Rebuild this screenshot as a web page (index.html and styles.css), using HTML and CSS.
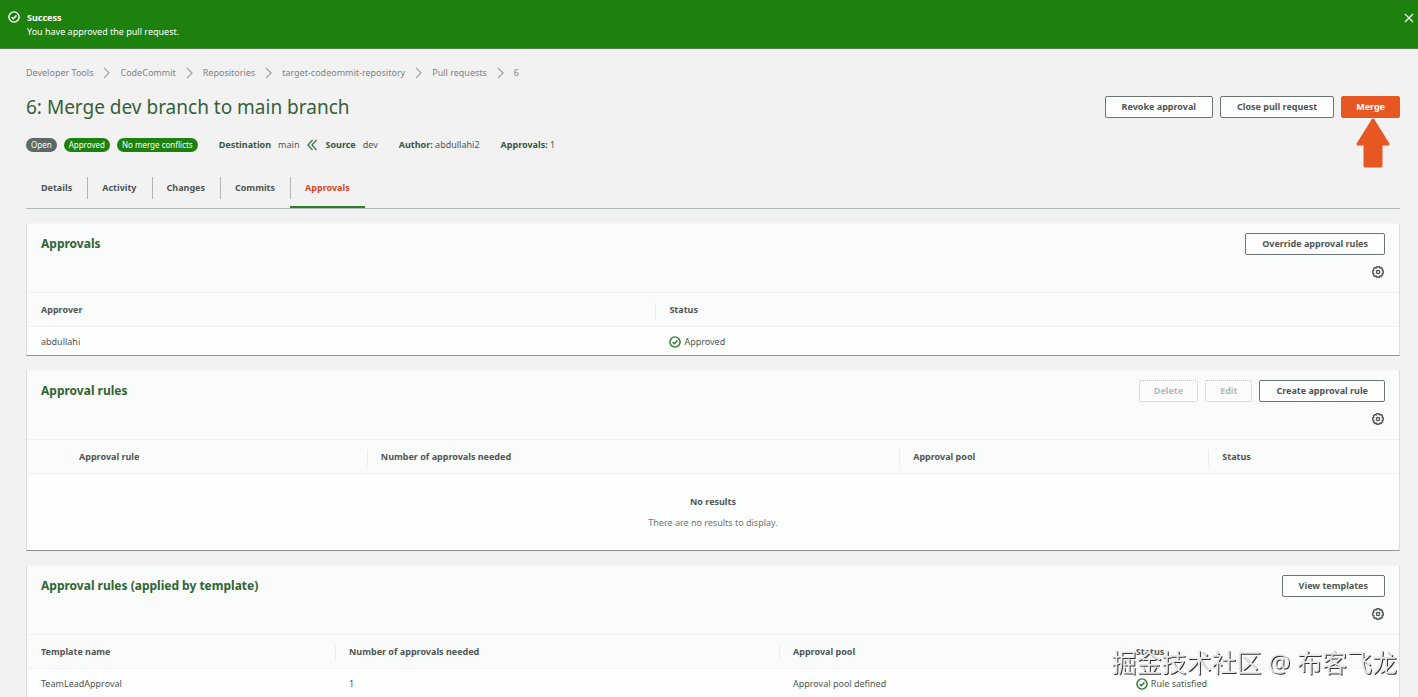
FILE: index.html
```html
<!DOCTYPE html>
<html lang="en">
<head>
  <meta charset="UTF-8">
  <meta name="viewport" content="width=device-width, initial-scale=1.0">
  <title>Merge dev branch to main branch</title>
  <link rel="stylesheet" href="styles.css">
</head>
<body>

  <!-- shared icons -->
  <svg class="icon-defs" aria-hidden="true">
    <symbol id="icon-check" viewBox="0 0 16 16">
      <circle cx="8" cy="8" r="6.8" fill="none" stroke="currentColor" stroke-width="1.9"/>
      <path d="M4.8 8.2l2.3 2.2 4.2-4.4" fill="none" stroke="currentColor" stroke-width="1.9"/>
    </symbol>
    <symbol id="icon-gear" viewBox="0 0 16 16">
      <path d="M6.4 1h3.2l.7 1.6 1.8-.6 2 2-.6 1.7 1.5.7v3.2l-1.5.7.6 1.7-2 2-1.8-.6-.7 1.6H6.4l-.7-1.6-1.8.6-2-2 .6-1.7L1 9.6V6.4l1.5-.7L1.9 4l2-2 1.8.6z" fill="none" stroke="currentColor" stroke-width="1.9" stroke-linejoin="round"/>
      <circle cx="8" cy="8" r="2.2" fill="none" stroke="currentColor" stroke-width="1.9"/>
    </symbol>
    <symbol id="icon-chevron" viewBox="0 0 8 12">
      <path d="M1.5 1l5 5-5 5" fill="none" stroke="currentColor" stroke-width="1.4"/>
    </symbol>
  </svg>

  <div class="flash" role="status">
    <svg class="icon"><use href="#icon-check"/></svg>
    <div class="flash-text">
      <strong>Success</strong>
      <p>You have approved the pull request.</p>
    </div>
    <button class="flash-close" type="button" aria-label="Dismiss">
      <svg viewBox="0 0 10 10"><path d="M1 1l8 8M9 1l-8 8" fill="none" stroke="currentColor" stroke-width="1.2"/></svg>
    </button>
  </div>

  <main>
    <nav class="breadcrumbs" aria-label="Breadcrumbs">
      <a href="#">Developer Tools</a>
      <svg><use href="#icon-chevron"/></svg>
      <a href="#">CodeCommit</a>
      <svg><use href="#icon-chevron"/></svg>
      <a href="#">Repositories</a>
      <svg><use href="#icon-chevron"/></svg>
      <a href="#">target-codeommit-repository</a>
      <svg><use href="#icon-chevron"/></svg>
      <a href="#">Pull requests</a>
      <svg><use href="#icon-chevron"/></svg>
      <a href="#" aria-current="page">6</a>
    </nav>

    <header class="title-bar">
      <h1>6: Merge dev branch to main branch</h1>
      <div class="actions">
        <button class="btn" type="button">Revoke approval</button>
        <button class="btn" type="button">Close pull request</button>
        <div class="merge">
          <button class="btn btn-primary" type="button">Merge</button>
          <svg class="arrow" viewBox="0 0 34 50" aria-hidden="true">
            <path d="M17 2l15 24H25v22H9V26H2z" fill="currentColor" stroke="currentColor" stroke-width="3" stroke-linejoin="round"/>
          </svg>
        </div>
      </div>
    </header>

    <div class="meta">
      <div class="badges">
        <span class="badge badge-grey">Open</span>
        <span class="badge">Approved</span>
        <span class="badge">No merge conflicts</span>
      </div>
      <div class="branches">
        <b>Destination</b>
        <span>main</span>
        <svg viewBox="0 0 10 12"><path d="M5.5 1L1 6l4.500 5M9.5 1L5 6l4.500 5" fill="none" stroke="currentColor" stroke-width="1.4"/></svg>
        <b>Source</b>
        <span>dev</span>
      </div>
      <div><b>Author:</b> abdullahi2</div>
      <div><b>Approvals:</b> 1</div>
    </div>

    <nav class="tabs" aria-label="Pull request">
      <a href="#">Details</a>
      <a href="#">Activity</a>
      <a href="#">Changes</a>
      <a href="#">Commits</a>
      <a class="active" href="#">Approvals</a>
    </nav>

    <section class="panel">
      <div class="panel-header">
        <h2>Approvals</h2>
        <div class="actions">
          <button class="btn" type="button">Override approval rules</button>
        </div>
        <button class="settings" type="button" aria-label="Preferences"><svg class="icon"><use href="#icon-gear"/></svg></button>
      </div>
      <table class="approvals-table">
        <thead>
          <tr><th>Approver</th><th>Status</th></tr>
        </thead>
        <tbody>
          <tr>
            <td>abdullahi</td>
            <td><span class="status"><svg class="icon"><use href="#icon-check"/></svg>Approved</span></td>
          </tr>
        </tbody>
      </table>
    </section>

    <section class="panel">
      <div class="panel-header">
        <h2>Approval rules</h2>
        <div class="actions">
          <button class="btn" type="button" disabled>Delete</button>
          <button class="btn" type="button" disabled>Edit</button>
          <button class="btn" type="button">Create approval rule</button>
        </div>
        <button class="settings" type="button" aria-label="Preferences"><svg class="icon"><use href="#icon-gear"/></svg></button>
      </div>
      <table class="rules-table">
        <thead>
          <tr><th></th><th>Approval rule</th><th>Number of approvals needed</th><th>Approval pool</th><th>Status</th></tr>
        </thead>
        <tbody>
          <tr>
            <td class="empty" colspan="5">
              <b>No results</b>
              <p>There are no results to display.</p>
            </td>
          </tr>
        </tbody>
      </table>
    </section>

    <section class="panel">
      <div class="panel-header">
        <h2>Approval rules (applied by template)</h2>
        <div class="actions">
          <button class="btn" type="button">View templates</button>
        </div>
        <button class="settings" type="button" aria-label="Preferences"><svg class="icon"><use href="#icon-gear"/></svg></button>
      </div>
      <table class="template-table">
        <thead>
          <tr><th>Template name</th><th>Number of approvals needed</th><th>Approval pool</th><th>Status</th></tr>
        </thead>
        <tbody>
          <tr>
            <td>TeamLeadApproval</td>
            <td>1</td>
            <td>Approval pool defined</td>
            <td><span class="status"><svg class="icon"><use href="#icon-check"/></svg>Rule satisfied</span></td>
          </tr>
        </tbody>
      </table>
    </section>
  </main>

  <div class="watermark">掘金技术社区 @ 布客飞龙</div>

</body>
</html>
```

FILE: styles.css
```css
* {
  box-sizing: border-box;
}

body {
  margin: 0;
  background: #f2f2f2;
  color: #4f5654;
  font-family: "Noto Sans", "Open Sans", sans-serif;
  font-size: 9px;
  line-height: 14px;
}

h1, h2, p {
  margin: 0;
}

a {
  color: inherit;
  text-decoration: none;
}

button {
  font: inherit;
  color: inherit;
  cursor: pointer;
}

.icon-defs {
  display: none;
}

.icon {
  display: block;
  width: 12px;
  height: 12px;
}

/* success message */
.flash {
  display: flex;
  align-items: flex-start;
  gap: 7px;
  padding: 11px 4px 9px 8px;
  background: #1d810e;
  border-bottom: 1px solid #4f7d48;
  color: white;
}

.flash-text {
  flex: 1;
}

.flash-text strong {
  display: block;
}

.flash-close {
  display: flex;
  padding: 2px 0;
  border: none;
  background: none;
}

.flash-close svg {
  width: 10px;
  height: 10px;
}

main {
  padding: 17px 18px 0 26px;
}

.breadcrumbs {
  display: flex;
  align-items: center;
  gap: 9px;
  color: #7c8583;
}

.breadcrumbs svg {
  width: 9px;
  height: 12px;
  color: #a3abaa;
}

.title-bar {
  display: flex;
  justify-content: space-between;
  align-items: center;
  margin-top: 15px;
}

h1 {
  color: #35613a;
  font-size: 19px;
  font-weight: 400;
  line-height: 24px;
}

.actions {
  display: flex;
  gap: 7px;
}

.btn {
  height: 22px;
  padding: 0 16px;
  border: 1px solid #6b7573;
  border-radius: 2px;
  background: white;
  font-weight: bold;
}

.btn:disabled {
  padding: 0 14px;
  border: 1px dotted #bcc3c1;
  background: transparent;
  color: #b5bbba;
  cursor: default;
}

.btn-primary {
  padding: 0 14px;
  border-color: #e65722;
  background: #e65722;
  color: white;
}

.merge {
  position: relative;
}

/* arrow pointing at the merge button */
.arrow {
  position: absolute;
  top: 100%;
  right: 10px;
  width: 34px;
  height: 50px;
  color: #e65722;
}

.meta {
  display: flex;
  align-items: center;
  gap: 21px;
  margin-top: 19px;
}

.meta b {
  color: #355843;
}

.badges,
.branches {
  display: flex;
  align-items: center;
  gap: 7px;
}

.branches svg {
  width: 12px;
  height: 12px;
  color: #4a7455;
}

.badge {
  padding: 0 5px;
  border-radius: 7px;
  background: #1d810e;
  color: white;
  font-size: 8px;
}

.badge-grey {
  background: #5b6a66;
}

.tabs {
  display: flex;
  margin-top: 25px;
  border-bottom: 1px solid #b5baba;
  font-weight: bold;
}

.tabs a {
  display: flex;
  padding-right: 15px;
  padding-bottom: 7px;
  border-bottom: 2px solid transparent;
  line-height: 22px;
}

.tabs a::before {
  content: "";
  width: 1px;
  height: 22px;
  margin-right: 14px;
  background: #b0b6b5;
}

.tabs a:first-child::before {
  background: transparent;
}

.tabs .active {
  border-color: #2f7d2c;
  color: #d9491a;
}

.panel {
  margin-top: 14px;
  border: 1px solid #dadddd;
  border-top-color: #f6f7f7;
  border-bottom-color: #8d9392;
  background: #fafbfb;
}

.panel-header {
  display: grid;
  grid-template-columns: 1fr auto;
  align-items: center;
  row-gap: 11px;
  padding: 9px 14px 14px;
}

h2 {
  color: #2f6433;
  font-size: 12px;
  line-height: 16px;
}

.settings {
  grid-column: 2;
  justify-self: end;
  padding: 0 1px;
  border: none;
  background: none;
}

table {
  width: 100%;
  border-collapse: collapse;
  table-layout: fixed;
}

th {
  height: 34px;
  padding: 3px 0 0;
  border-top: 1px solid #f1f3f3;
  border-bottom: 1px solid #f1f3f3;
  text-align: left;
}

/* the divider is shorter than the header cell */
th::before {
  content: "";
  display: inline-block;
  height: 16px;
  margin-right: 13px;
  border-left: 1px solid #eceeee;
  vertical-align: middle;
}

th:first-child::before {
  border-color: transparent;
}

.rules-table th:nth-child(2)::before {
  border-color: #f6f7f7;
}

td {
  height: 28px;
  padding: 2px 14px 0;
  background: #fdfefe;
}

.approvals-table th:nth-child(1) { width: 45.8%; }

.rules-table th:nth-child(1) { width: 38px; }
.rules-table th:nth-child(2) { width: 22%; }
.rules-table th:nth-child(3) { width: 38.8%; }
.rules-table th:nth-child(5) { width: 13.9%; }

.template-table th:nth-child(1) { width: 308px; }
.template-table th:nth-child(2) { width: 444px; }
.template-table th:nth-child(4) { width: 20.2%; }

.status {
  display: flex;
  align-items: center;
  gap: 3px;
}

.status .icon {
  color: #27762a;
}

.empty {
  height: 77px;
  text-align: center;
}

.empty p {
  margin-top: 7px;
  color: #6d7674;
}

.watermark {
  position: fixed;
  right: 21px;
  bottom: 17px;
  color: #e9e9e9;
  font-family: "Noto Sans", "Noto Sans CJK SC", sans-serif;
  font-size: 25px;
  line-height: 36px;
  text-shadow: 1px 1px 0 #333;
}
```
